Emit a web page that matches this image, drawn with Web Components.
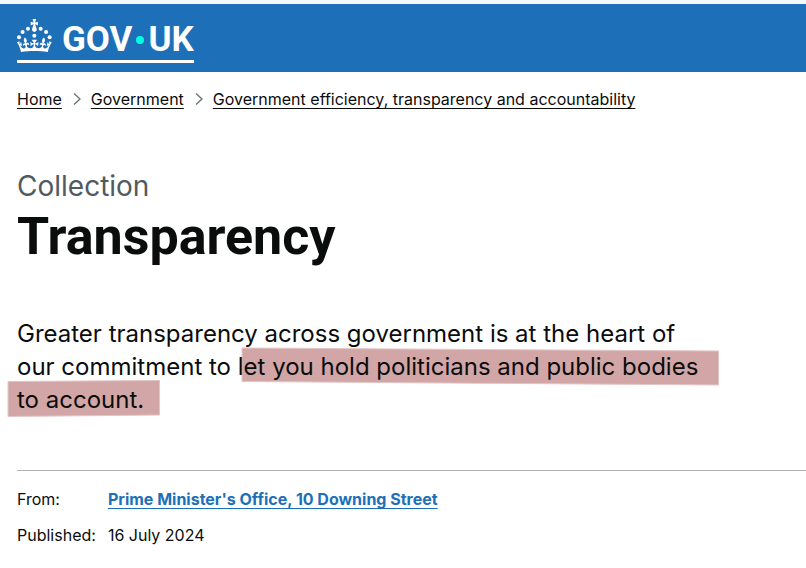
<!DOCTYPE html>
<html lang="en">
<head>
<meta charset="utf-8">
<title>Transparency - GOV.UK</title>
<style>
  body { margin: 0; background: #fff; color: #0b0c0c; font-family: Inter, "Noto Sans", sans-serif; font-size: 16px; line-height: 20px; }
  main { display: block; padding-left: 17px; }
</style>
</head>
<body>
<site-header></site-header>
<main>
  <bread-crumbs>
    <crumb-item href="#home">Home</crumb-item>
    <crumb-item href="#government">Government</crumb-item>
    <crumb-item href="#efficiency">Government efficiency, transparency and accountability</crumb-item>
  </bread-crumbs>
  <page-title><span slot="caption">Collection</span>Transparency</page-title>
  <lead-text>Greater transparency across government is at the heart of our commitment to let you hold politicians and public bodies to account.</lead-text>
  <publish-meta>
    <a slot="from" href="#office">Prime Minister's Office, 10 Downing Street</a>
    <span slot="published">16 July 2024</span>
  </publish-meta>
</main>

<template id="site-header">
  <style>
    :host { display: block; background: #1d70b8; border-top: 4px solid #f4f8fb; padding: 14px 17px 9px; }
    a { display: inline-flex; align-items: flex-end; box-sizing: border-box; height: 45px; padding-bottom: 8px; border-bottom: 3px solid #fff; color: #fff; text-decoration: none; }
    .crown { width: 35px; height: 33px; margin-right: 10px; }
    .word { display: flex; align-items: center; font: 700 35px/25px Roboto, sans-serif; }
    .dot { width: 8px; height: 8px; margin: 0 4px; border-radius: 50%; background: #00ffe0; }
  </style>
  <a href="#home" aria-label="GOV.UK">
    <svg class="crown" viewBox="0 0 64 60" fill="#fff" aria-hidden="true">
      <circle cx="20" cy="17.6" r="3.7"/><circle cx="10.2" cy="23.5" r="3.7"/><circle cx="3.7" cy="33.2" r="3.7"/><circle cx="31.7" cy="30.6" r="3.7"/><circle cx="43.3" cy="17.6" r="3.7"/><circle cx="53.2" cy="23.5" r="3.7"/><circle cx="59.7" cy="33.2" r="3.7"/>
      <path d="M33.1,9.8c.2-.1.3-.3.5-.5l4.6,2.4v-6.8l-4.6,1.5c-.1-.2-.3-.3-.5-.5l1.9-5.9h-6.7l1.9,5.9c-.2.1-.3.3-.5.5l-4.6-1.5v6.8l4.6-2.4c.1.2.3.3.5.5l-2.6,8c-.9,2.8,1.2,5.7,4.1,5.7h0c3,0,5.1-2.9,4.1-5.7l-2.6-8ZM37,37.9s-3.4,3.8-4.1,6.1c2.2,0,4.2-.5,6.4-2.8l-.7,8.5c-2-2.8-4.4-4.1-5.7-3.8.1,3.1.5,6.7,5.8,7.2,3.7.3,6.7-1.5,7-3.8.4-2.6-2-4.3-3.7-1.6-1.4-4.5,2.4-6.1,4.9-3.2-1.9-4.5-1.8-7.7,2.4-10.9,3,4,2.6,7.3-1.2,11.1,2.4-1.3,6.2,0,4,4.6-1.2-2.8-3.7-2.2-4.2.2-.3,1.7.7,3.7,3,4.2,1.9.3,4.7-.9,7-5.9-1.3,0-2.4.7-3.9,1.7l2.4-8c.6,2.3,1.4,3.7,2.2,4.5.6-1.6.5-2.8,0-5.3l5,1.8c-2.6,3.6-5.2,8.7-7.3,17.5-7.4-1.1-15.7-1.7-24.5-1.7h0c-8.8,0-17.1.6-24.5,1.7-2.1-8.9-4.7-13.9-7.3-17.5l5-1.8c-.5,2.5-.6,3.7,0,5.3.8-.8,1.6-2.3,2.2-4.5l2.4,8c-1.5-1-2.6-1.7-3.9-1.7,2.3,5,5.2,6.2,7,5.9,2.3-.4,3.3-2.4,3-4.2-.5-2.4-3-3.1-4.2-.2-2.2-4.6,1.6-6,4-4.6-3.7-3.7-4.2-7.1-1.2-11.1,4.2,3.2,4.3,6.4,2.4,10.9,2.5-2.8,6.3-1.3,4.9,3.2-1.8-2.7-4.1-1-3.7,1.6.3,2.3,3.3,4.1,7,3.8,5.4-.5,5.7-4.2,5.8-7.2-1.3-.2-3.7,1-5.7,3.8l-.7-8.5c2.2,2.3,4.2,2.7,6.4,2.8-.7-2.3-4.1-6.1-4.1-6.1h10.6Z"/>
    </svg>
    <span class="word"><span>GOV</span><i class="dot"></i><span>UK</span></span>
  </a>
</template>

<template id="bread-crumbs">
  <style>
    :host { display: block; padding-top: 17px; }
    nav { display: flex; flex-wrap: wrap; }
  </style>
  <nav aria-label="Breadcrumb"><slot></slot></nav>
</template>

<template id="crumb-item">
  <style>
    :host { display: flex; align-items: center; }
    svg { width: 8px; height: 12px; margin: 0 10px 0 11px; }
    :host(:first-of-type) svg { display: none; }
    a { color: #0b0c0c; text-decoration: underline; text-decoration-thickness: 1px; text-underline-offset: 3px; }
  </style>
  <svg viewBox="0 0 8 12" fill="none" stroke="#6b7478" stroke-width="1.4" aria-hidden="true"><path d="M1 .5 7 6 1 11.5"/></svg>
  <a><slot></slot></a>
</template>

<template id="page-title">
  <style>
    :host { display: block; padding-top: 60px; }
    .caption { display: block; color: #505a5f; font-size: 28px; line-height: 34px; }
    h1 { margin: 6px 0 0; font: 700 52px/56px Roboto, sans-serif; }
  </style>
  <span class="caption"><slot name="caption"></slot></span>
  <h1><slot></slot></h1>
</template>

<template id="lead-text">
  <style>
    :host { display: block; position: relative; padding-top: 52px; max-width: 688px; }
    p { position: relative; margin: 0; font-size: 24px; line-height: 33px; }
    svg { position: absolute; left: -10px; bottom: -2px; width: 712px; height: 71px; overflow: visible; }
  </style>
  <svg viewBox="0 0 712 71" fill="#d2a6a6" stroke="#e3c5c5" stroke-width="1" aria-hidden="true">
    <path d="M235 1 711.500 4V38L235 34.500Z"/>
    <path d="M1 34.500 152.500 33.500V68L1 69.500Z"/>
  </svg>
  <p><slot></slot></p>
</template>

<template id="publish-meta">
  <style>
    :host { display: block; margin-top: 54px; border-top: 1px solid #b1b4b6; padding-top: 18px; }
    dl { display: grid; grid-template-columns: auto 1fr; gap: 16px 12px; margin: 0; }
    dd { margin: 0; }
    ::slotted(a) { color: #1d70b8; font-weight: 700; text-decoration: underline; text-decoration-thickness: 1px; text-underline-offset: 3px; }
  </style>
  <dl>
    <dt>From:</dt><dd><slot name="from"></slot></dd>
    <dt>Published:</dt><dd><slot name="published"></slot></dd>
  </dl>
</template>

<script>
  class TemplateElement extends HTMLElement {
    constructor() {
      super();
      const template = document.getElementById(this.localName);
      this.attachShadow({ mode: 'open' }).append(template.content.cloneNode(true));
    }
  }
  class SiteHeader extends TemplateElement {}
  class BreadCrumbs extends TemplateElement {}
  class CrumbItem extends TemplateElement {
    connectedCallback() {
      this.shadowRoot.querySelector('a').href = this.getAttribute('href');
    }
  }
  class PageTitle extends TemplateElement {}
  class LeadText extends TemplateElement {}
  class PublishMeta extends TemplateElement {}
  customElements.define('site-header', SiteHeader);
  customElements.define('bread-crumbs', BreadCrumbs);
  customElements.define('crumb-item', CrumbItem);
  customElements.define('page-title', PageTitle);
  customElements.define('lead-text', LeadText);
  customElements.define('publish-meta', PublishMeta);
</script>
</body>
</html>
